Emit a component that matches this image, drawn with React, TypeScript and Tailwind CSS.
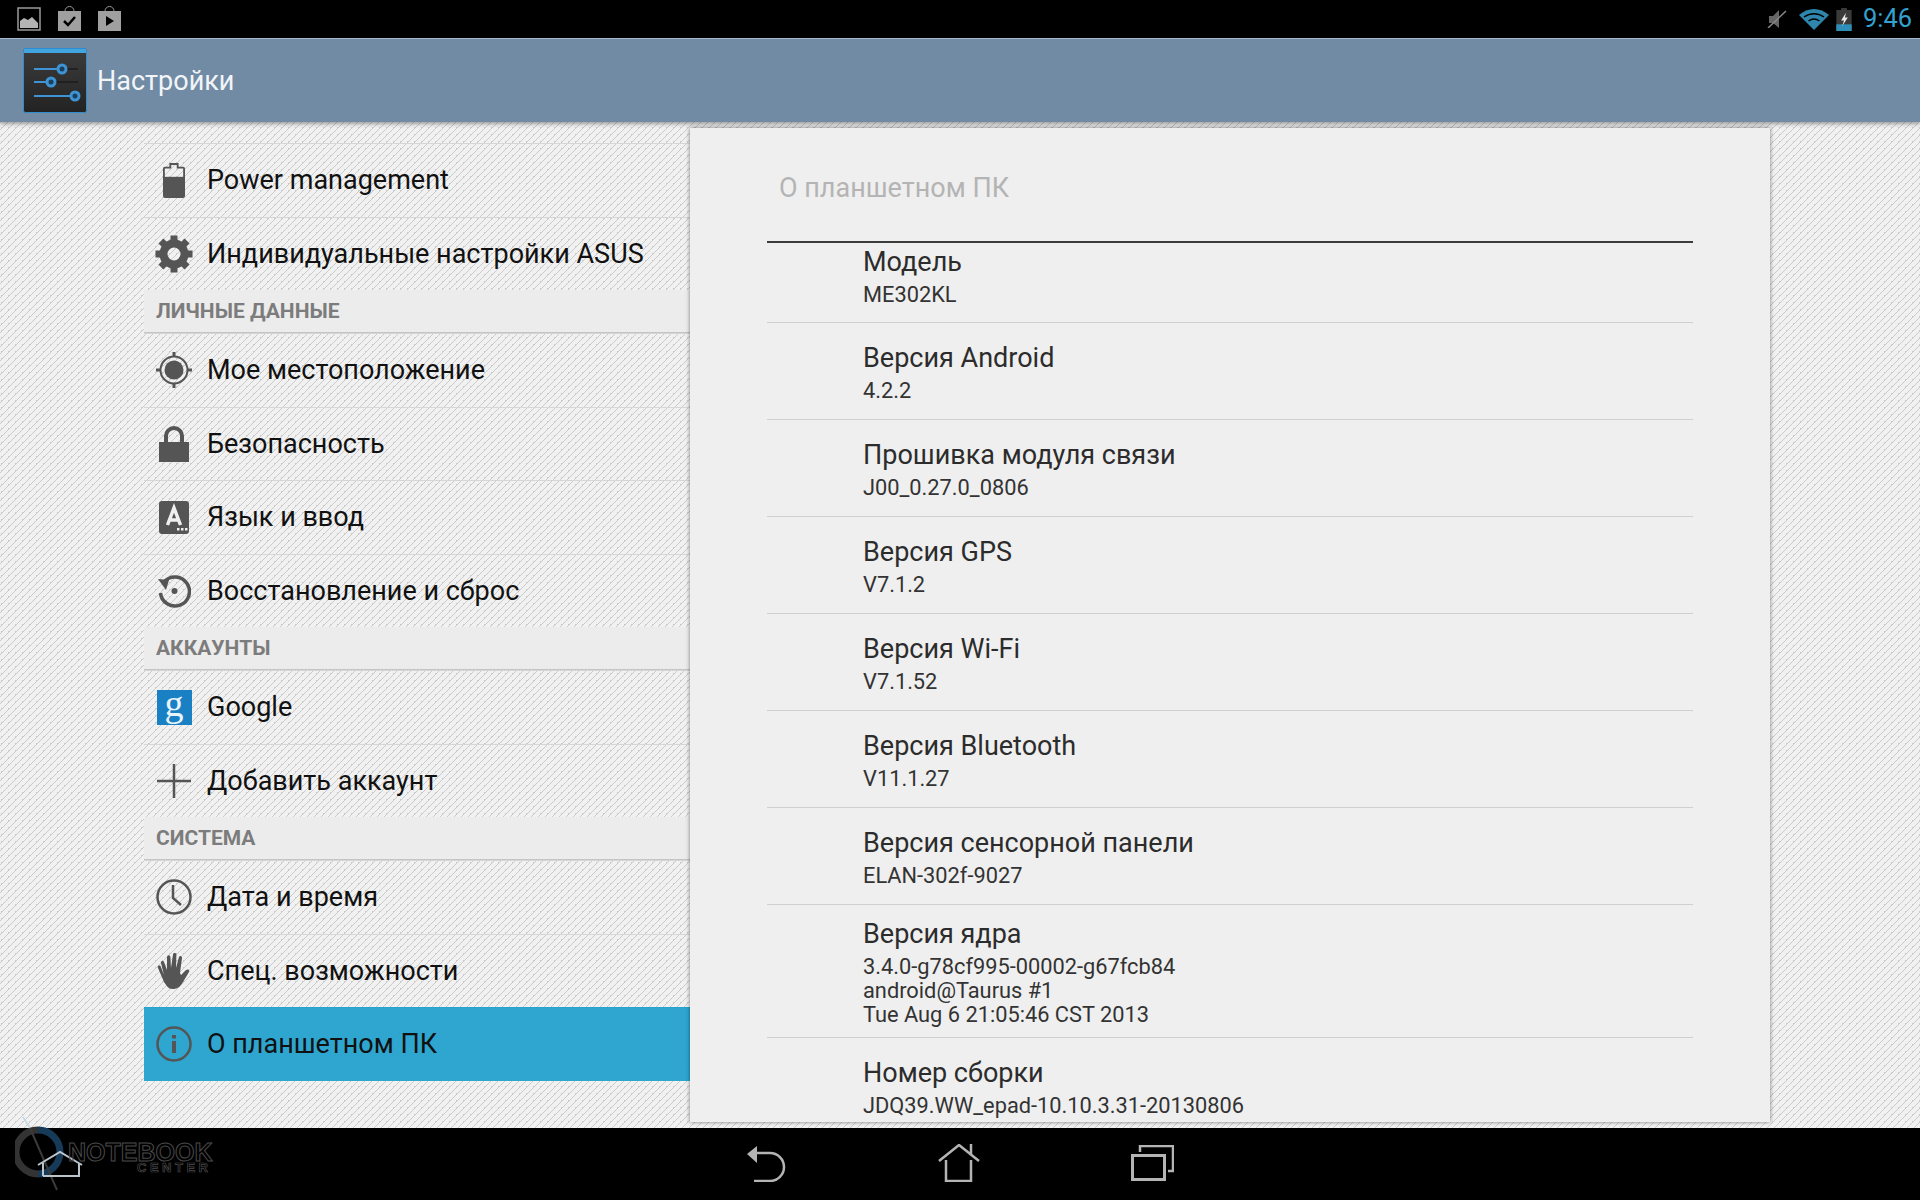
import React from "react";

const ICON = "#555555";

// seamless 7px tile, keeps the thin diagonal lines even across the page
const stripes =
  "bg-[#f1f1f1] bg-[linear-gradient(135deg,#cbcbcb_13%,#f1f1f1_13%,#f1f1f1_50%,#cbcbcb_50%,#cbcbcb_63%,#f1f1f1_63%)] bg-[length:7px_7px]";

const BatteryIcon = () => (
  <svg width="22" height="35" viewBox="0 0 24 38">
    <path d="M8 1h8v4h6a1 1 0 0 1 1 1v30a1 1 0 0 1-1 1H2a1 1 0 0 1-1-1V6a1 1 0 0 1 1-1h6z" fill="none" stroke={ICON} strokeWidth="2" />
    <rect x="1" y="15" width="22" height="22" fill={ICON} />
  </svg>
);

const GearIcon = () => (
  <svg width="38" height="38" viewBox="0 0 38 38">
    <circle cx="19" cy="19" r="10.5" fill="none" stroke={ICON} strokeWidth="8" />
    {[0, 45, 90, 135, 180, 225, 270, 315].map((a) => (
      <rect key={a} x="15.5" y="0.5" width="7" height="8" fill={ICON} transform={`rotate(${a} 19 19)`} />
    ))}
  </svg>
);

const LocationIcon = () => (
  <svg width="38" height="38" viewBox="0 0 38 38">
    <circle cx="19" cy="19" r="9.5" fill={ICON} />
    <circle cx="19" cy="19" r="13.5" fill="none" stroke={ICON} strokeWidth="2" />
    <path d="M19 1v5M19 32v5M1 19h5M32 19h5" stroke={ICON} strokeWidth="3" />
  </svg>
);

const LockIcon = () => (
  <svg width="30" height="37" viewBox="0 0 30 37">
    <path d="M7 19V11a8 8 0 0 1 16 0v8" fill="none" stroke={ICON} strokeWidth="4" />
    <rect x="0" y="17" width="30" height="20" fill={ICON} />
  </svg>
);

const LanguageIcon = () => (
  <svg width="30" height="33" viewBox="0 0 30 33">
    <rect width="30" height="33" rx="3" fill={ICON} />
    <path d="M8.500 24l6.500-17 6.500 17M11 19h8" fill="none" stroke="#f0f0f0" strokeWidth="3.500" />
    <path d="M18 27h2.500v2.500H18zM22 27h2.500v2.500H22zM26 27h2.500v2.500H26z" fill="#f0f0f0" />
  </svg>
);

const ResetIcon = () => (
  <svg width="34" height="34" viewBox="0 0 34 34">
    <path d="M7 8a14.500 14.500 0 1 1-3.500 11" fill="none" stroke={ICON} strokeWidth="3.500" />
    <path d="M1 5l11 1-3 10z" fill={ICON} />
    <circle cx="17.5" cy="17" r="3" fill={ICON} />
  </svg>
);

const GoogleIcon = () => (
  <div className="w-[35px] h-[35px] bg-[#1a80c4] flex items-center justify-center text-[#e8f4fb] text-[38px] leading-[35px] pb-[7px] font-['Liberation_Serif',serif]">
    g
  </div>
);

const PlusIcon = () => (
  <svg width="34" height="34" viewBox="0 0 34 34">
    <path d="M17 0v34M0 17h34" stroke={ICON} strokeWidth="2.500" />
  </svg>
);

const ClockIcon = () => (
  <svg width="36" height="36" viewBox="0 0 36 36">
    <circle cx="18" cy="18" r="16.5" fill="none" stroke={ICON} strokeWidth="2.500" />
    <path d="M17 6v13l8 7" fill="none" stroke={ICON} strokeWidth="2.500" />
  </svg>
);

const HandIcon = () => (
  <svg width="34" height="36" viewBox="0 0 34 36">
    <path
      d="M7 22L4 10a1.500 1.500 0 0 1 3-1l3 8L10 4a1.700 1.700 0 0 1 3.400 0l.6 11L16 1.500a1.700 1.700 0 0 1 3.400.3L19 15l3-11a1.600 1.600 0 0 1 3 1l-2 15 1 2 5-5c2-1.500 4 0 3 2l-6 10c-3 5-6 7-10 7-6 0-7-5-9-7L1 15c-1-2 1-3 2.500-2z"
      fill={ICON}
    />
  </svg>
);

const InfoIcon = () => (
  <svg width="36" height="36" viewBox="0 0 36 36">
    <circle cx="18" cy="18" r="16.5" fill="none" stroke={ICON} strokeWidth="2.500" />
    <rect x="16" y="15" width="4" height="12" fill={ICON} />
    <rect x="16" y="9" width="4" height="3.500" fill={ICON} />
  </svg>
);

type NavEntry =
  | { kind: "header"; label: string }
  | { kind: "item"; label: string; icon: React.ReactNode; active?: boolean };

const navEntries: NavEntry[] = [
  { kind: "item", label: "Power management", icon: <BatteryIcon /> },
  { kind: "item", label: "Индивидуальные настройки ASUS", icon: <GearIcon /> },
  { kind: "header", label: "ЛИЧНЫЕ ДАННЫЕ" },
  { kind: "item", label: "Мое местоположение", icon: <LocationIcon /> },
  { kind: "item", label: "Безопасность", icon: <LockIcon /> },
  { kind: "item", label: "Язык и ввод", icon: <LanguageIcon /> },
  { kind: "item", label: "Восстановление и сброс", icon: <ResetIcon /> },
  { kind: "header", label: "АККАУНТЫ" },
  { kind: "item", label: "Google", icon: <GoogleIcon /> },
  { kind: "item", label: "Добавить аккаунт", icon: <PlusIcon /> },
  { kind: "header", label: "СИСТЕМА" },
  { kind: "item", label: "Дата и время", icon: <ClockIcon /> },
  { kind: "item", label: "Спец. возможности", icon: <HandIcon /> },
  { kind: "item", label: "О планшетном ПК", icon: <InfoIcon />, active: true },
];

const aboutRows: { title: string; lines: string[]; rowClass: string }[] = [
  { title: "Модель", lines: ["ME302KL"], rowClass: "h-[80px] pt-[1px]" },
  { title: "Версия Android", lines: ["4.2.2"], rowClass: "h-[97px] pt-[17px]" },
  { title: "Прошивка модуля связи", lines: ["J00_0.27.0_0806"], rowClass: "h-[97px] pt-[17px]" },
  { title: "Версия GPS", lines: ["V7.1.2"], rowClass: "h-[97px] pt-[17px]" },
  { title: "Версия Wi-Fi", lines: ["V7.1.52"], rowClass: "h-[97px] pt-[17px]" },
  { title: "Версия Bluetooth", lines: ["V11.1.27"], rowClass: "h-[97px] pt-[17px]" },
  { title: "Версия сенсорной панели", lines: ["ELAN-302f-9027"], rowClass: "h-[97px] pt-[17px]" },
  {
    title: "Версия ядра",
    lines: ["3.4.0-g78cf995-00002-g67fcb84", "android@Taurus #1", "Tue Aug 6 21:05:46 CST 2013"],
    rowClass: "h-[133px] pt-[11px]",
  },
  { title: "Номер сборки", lines: ["JDQ39.WW_epad-10.10.3.31-20130806"], rowClass: "h-[97px] pt-[17px]" },
];

const StatusBar = () => (
  <div className="h-[38px] bg-black flex items-center justify-between pl-[17px] pr-[11px]">
    <div className="flex items-center gap-[17px] pb-[1px]">
      <svg width="24" height="24" viewBox="0 0 24 24">
        <rect x="1" y="1" width="22" height="22" fill="none" stroke="#9a9a9a" strokeWidth="1.500" />
        <path d="M3 21v-7l4-3 4 2 4-3 6 6v5z" fill="#b4b4b4" />
      </svg>
      <svg width="23" height="25" viewBox="0 0 23 25">
        <path d="M7 8V5a4.500 4.500 0 0 1 9 0v3" fill="none" stroke="#9a9a9a" strokeWidth="1" />
        <rect y="5" width="23" height="20" fill="#a0a0a0" />
        <path d="M6 15l4 4 7-8" fill="none" stroke="#000" strokeWidth="2.500" />
      </svg>
      <svg width="23" height="25" viewBox="0 0 23 25">
        <path d="M7 8V5a4.500 4.500 0 0 1 9 0v3" fill="none" stroke="#9a9a9a" strokeWidth="1" />
        <rect y="5" width="23" height="20" fill="#a0a0a0" />
        <path d="M8 10l8 5-8 5z" fill="#000" />
      </svg>
    </div>
    <div className="flex items-center">
      <svg width="20" height="18" viewBox="0 0 20 18" className="mr-[12px]">
        <path d="M2 6h4l6-6v18l-6-5H2z" fill="#666" />
        <path d="M1 18L19 1" stroke="#888" strokeWidth="1.500" />
      </svg>
      <svg width="30" height="21" viewBox="0 0 30 21" className="mr-[7px]">
        <path d="M0 6C9-2 21-2 30 6L15 21z" fill="#2f86ad" />
        <path d="M5 8c6-4.500 14-4.500 20 0" fill="none" stroke="#000" strokeWidth="1.500" />
        <path d="M9.500 12c3.500-2.500 7.500-2.500 11 0" fill="none" stroke="#000" strokeWidth="1.500" />
      </svg>
      <svg width="16" height="23" viewBox="0 0 16 24" className="mr-[11px]">
        <path d="M5 0h6v2h5v22H0V2h5z" fill="#3a3a3a" />
        <rect y="17" width="16" height="7" fill="#2f8fb8" />
        <path d="M10 5L5 13h3l-2 6 6-9H9z" fill="#e8e8e8" />
      </svg>
      <span className="text-[#33a0cf] text-[25.5px] leading-none w-[46px] whitespace-nowrap">9:46</span>
    </div>
  </div>
);

const ActionBar = () => (
  <div className="h-[84px] bg-[#718ba5] border-t border-t-[#a5bad0] flex items-center pl-[23px] shadow-[0_2px_4px_rgba(0,0,0,0.35)] relative">
    <svg width="64" height="65" viewBox="0 0 64 65">
      <defs>
        <linearGradient id="tile" x1="0" y1="0" x2="0" y2="1">
          <stop offset="0" stopColor="#3c3c3c" />
          <stop offset="1" stopColor="#232323" />
        </linearGradient>
      </defs>
      <rect x="0.500" y="0.500" width="63" height="64" rx="2" fill="url(#tile)" stroke="#2f8dd0" />
      <rect x="1" y="1" width="62" height="4" fill="#42a5e0" />
      <path d="M11 21h44M11 34h44M11 48h44" stroke="#1c1c1c" strokeWidth="1.500" />
      <path d="M11 21h28M11 34h18M11 48h44" stroke="#3d93d3" strokeWidth="2" />
      <circle cx="39" cy="21" r="4" fill="#1c3f5c" stroke="#3d93d3" strokeWidth="3" />
      <circle cx="28" cy="34" r="4" fill="#1c3f5c" stroke="#3d93d3" strokeWidth="3" />
      <circle cx="52" cy="48" r="4" fill="#1c3f5c" stroke="#3d93d3" strokeWidth="3" />
    </svg>
    <span className="ml-[10px] pt-[2px] text-[27px] text-[#f2f5f8]">Настройки</span>
  </div>
);

const SideNav = () => (
  <div className="w-[546px] pt-[21px] flex flex-col">
    {navEntries.map((entry) =>
      entry.kind === "header" ? (
        <div
          key={entry.label}
          className="h-[43px] bg-[#ececec] border-b border-b-[#c4c4c4] flex items-center pl-[12px] pt-[2px] text-[21px] font-bold text-[#7c7c7c]"
        >
          {entry.label}
        </div>
      ) : (
        <div
          key={entry.label}
          className={`h-[73.5px] flex items-center border-t ${
            entry.active ? "bg-[#27a3ce]/[0.97] border-t-[#27a3ce]" : "border-t-[#d6d6d6]"
          }`}
        >
          <div className="w-[63px] pl-[7px] pr-[10px] flex items-center justify-center shrink-0">{entry.icon}</div>
          <span className="text-[27px] text-[#111111] whitespace-nowrap">{entry.label}</span>
        </div>
      )
    )}
  </div>
);

const AboutPanel = () => (
  <div className="w-[1080px] h-[994px] mt-[6px] bg-[#efefef] shadow-[0_0_4px_rgba(0,0,0,0.5)] px-[77px] overflow-hidden">
    <div className="h-[115px] border-b-2 border-b-[#3c3c3c] pl-[12px] pt-[42px] text-[27px] leading-[36px] text-[#b4b4b4]">
      О планшетном ПК
    </div>
    {aboutRows.map((row) => (
      <div key={row.title} className={`pl-[96px] border-b border-b-[#cfcfcf] ${row.rowClass}`}>
        <div className="text-[27px] leading-[36px] text-[#2c2c2c] mb-[3px]">{row.title}</div>
        {row.lines.map((line) => (
          <div key={line} className="text-[21.8px] leading-[24px] text-[#333333]">
            {line}
          </div>
        ))}
      </div>
    ))}
  </div>
);

const NavBar = () => (
  <div className="h-[72px] bg-black relative flex items-center justify-center gap-[151px] pb-[2px]">
    {/* watermark over the left end of the bar */}
    <div className="absolute left-[15px] top-[-12px] w-[200px] h-[80px]">
      <svg width="70" height="76" viewBox="0 0 70 76" className="absolute left-0 top-0">
        <path d="M23 14a22 22 0 0 0 0 44" fill="none" stroke="#333333" strokeWidth="7" />
        <path d="M23 14a22 22 0 0 1 0 44" fill="none" stroke="#163a58" strokeWidth="7" />
        <path d="M8 1l7 11" stroke="#c4d6e4" strokeWidth="1.500" />
        <path d="M15 12l27 62" stroke="#3a3a3a" strokeWidth="2" />
        <path d="M23 49l22-13 22 13M28 60V47M28 60h36V47" fill="none" stroke="#b9c4cc" strokeWidth="2" />
      </svg>
      <span className="absolute left-[53px] top-[26px] text-[25px] leading-[20px] font-black text-transparent [-webkit-text-stroke:1px_#4a4a4a] font-['Liberation_Sans',sans-serif] whitespace-nowrap">
        NOTEBOOK
      </span>
      <span className="absolute left-[122px] top-[47px] text-[13px] leading-[10px] font-black tracking-[3.500px] text-transparent [-webkit-text-stroke:0.7px_#4a4a4a] font-['Liberation_Sans',sans-serif] whitespace-nowrap">
        CENTER
      </span>
    </div>
    <svg width="40" height="37" viewBox="0 0 40 37">
      <path d="M0 9L10 1v17z" fill="#b4b4b4" />
      <path d="M10 8h13a14 14 0 0 1 0 28H7" fill="none" stroke="#b4b4b4" strokeWidth="2.500" />
    </svg>
    <svg width="42" height="38" viewBox="0 0 42 38">
      <path d="M1 17L21 1l20 16M33 11V0M8 16v21h25V16" fill="none" stroke="#b4b4b4" strokeWidth="2.500" />
    </svg>
    <svg width="43" height="36" viewBox="0 0 43 36">
      <path d="M9 7V1h33v25h-5" fill="none" stroke="#b4b4b4" strokeWidth="2.500" />
      <rect x="1.500" y="10.500" width="32" height="24" fill="none" stroke="#b4b4b4" strokeWidth="3" />
    </svg>
  </div>
);

export default function App() {
  return (
    <div className="w-[1920px] h-[1200px] flex flex-col overflow-hidden font-['Roboto',sans-serif]">
      <StatusBar />
      <ActionBar />
      <div className={`h-[1006px] flex pl-[144px] ${stripes}`}>
        <SideNav />
        <AboutPanel />
      </div>
      <NavBar />
    </div>
  );
}
